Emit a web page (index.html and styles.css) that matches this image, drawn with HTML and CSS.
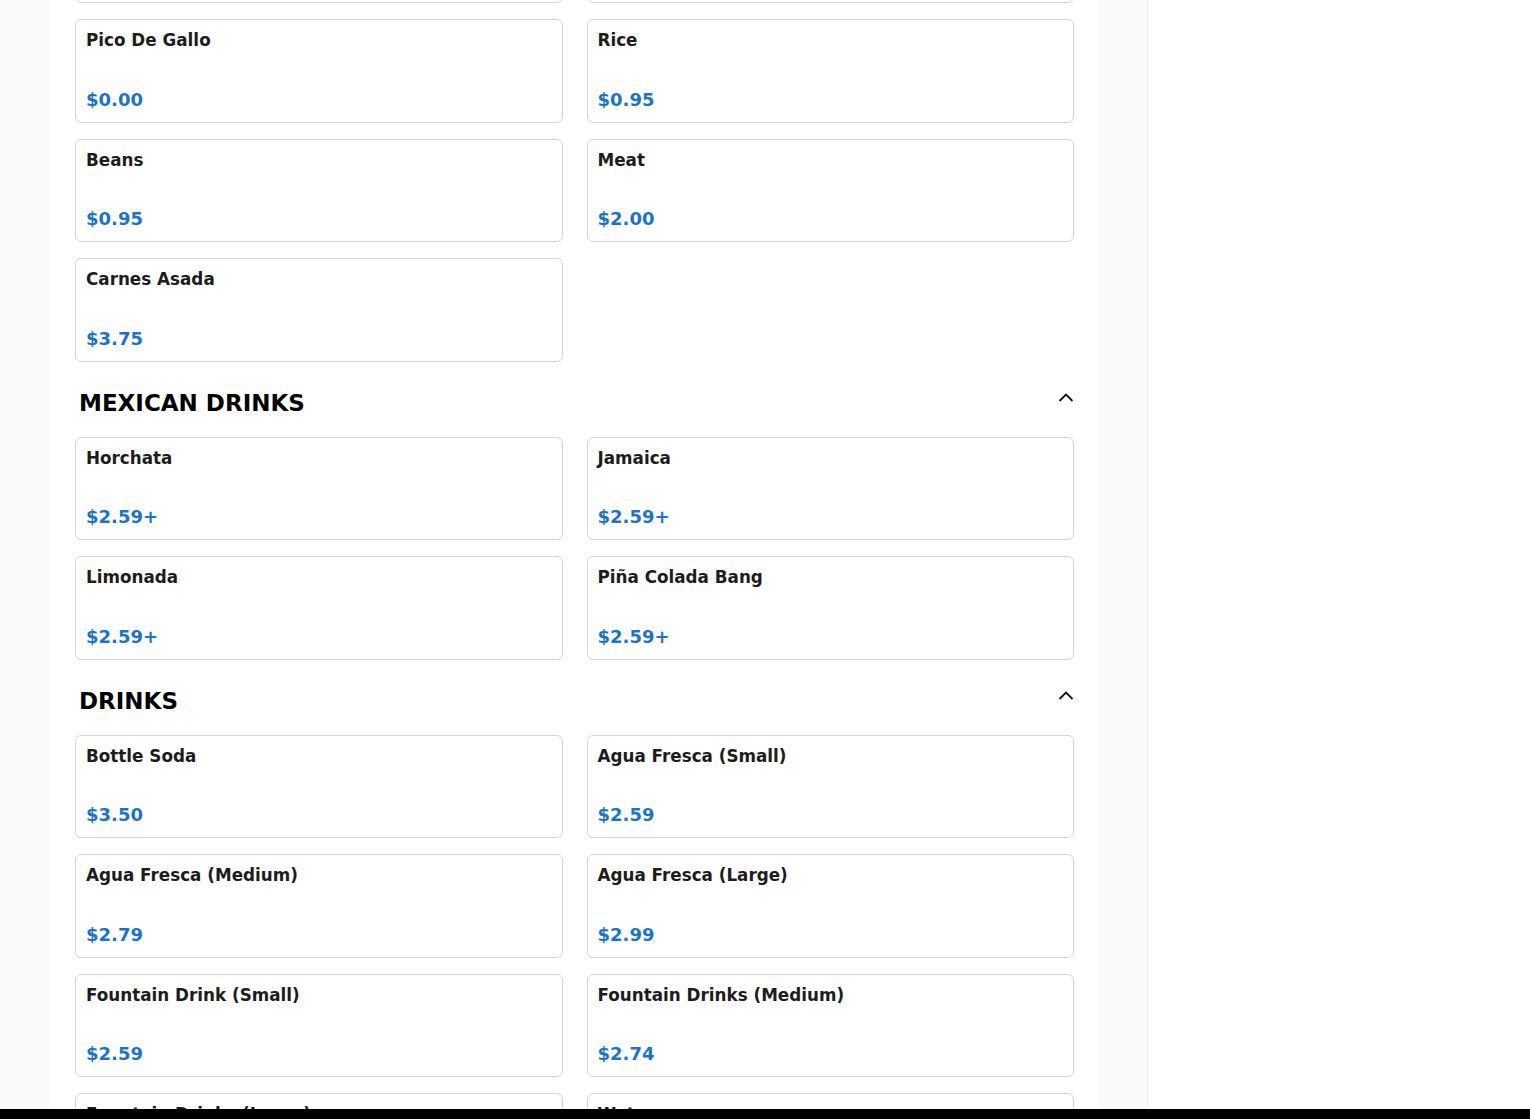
FILE: index.html
```html
<!DOCTYPE html>
<html lang="en">
<head>
    <meta charset="UTF-8">
    <meta name="viewport" content="width=device-width, initial-scale=1.0">
    <title>Menu</title>
    <link rel="stylesheet" href="styles.css">
</head>
<body>
    <div class="layout">
        <main class="menu">
            <div class="section">
                <div class="items">
                    <div class="item"><div class="item-name">Sour Cream</div><div class="item-price">$0.95</div></div>
                    <div class="item"><div class="item-name">Cheese</div><div class="item-price">$0.95</div></div>
                    <div class="item"><div class="item-name">Pico De Gallo</div><div class="item-price">$0.00</div></div>
                    <div class="item"><div class="item-name">Rice</div><div class="item-price">$0.95</div></div>
                    <div class="item"><div class="item-name">Beans</div><div class="item-price">$0.95</div></div>
                    <div class="item"><div class="item-name">Meat</div><div class="item-price">$2.00</div></div>
                    <div class="item"><div class="item-name">Carnes Asada</div><div class="item-price">$3.75</div></div>
                </div>
            </div>

            <div class="section">
                <div class="section-header">
                    <h2>MEXICAN DRINKS</h2>
                    <svg class="chevron" width="16" height="16" viewBox="0 0 16 16"><polyline points="1.5,11 8,4.5 14.5,11" fill="none" stroke="#111" stroke-width="1.8"/></svg>
                </div>
                <div class="items">
                    <div class="item"><div class="item-name">Horchata</div><div class="item-price">$2.59+</div></div>
                    <div class="item"><div class="item-name">Jamaica</div><div class="item-price">$2.59+</div></div>
                    <div class="item"><div class="item-name">Limonada</div><div class="item-price">$2.59+</div></div>
                    <div class="item"><div class="item-name">Piña Colada Bang</div><div class="item-price">$2.59+</div></div>
                </div>
            </div>

            <div class="section">
                <div class="section-header">
                    <h2>DRINKS</h2>
                    <svg class="chevron" width="16" height="16" viewBox="0 0 16 16"><polyline points="1.5,11 8,4.5 14.5,11" fill="none" stroke="#111" stroke-width="1.8"/></svg>
                </div>
                <div class="items">
                    <div class="item"><div class="item-name">Bottle Soda</div><div class="item-price">$3.50</div></div>
                    <div class="item"><div class="item-name">Agua Fresca (Small)</div><div class="item-price">$2.59</div></div>
                    <div class="item"><div class="item-name">Agua Fresca (Medium)</div><div class="item-price">$2.79</div></div>
                    <div class="item"><div class="item-name">Agua Fresca (Large)</div><div class="item-price">$2.99</div></div>
                    <div class="item"><div class="item-name">Fountain Drink (Small)</div><div class="item-price">$2.59</div></div>
                    <div class="item"><div class="item-name">Fountain Drinks (Medium)</div><div class="item-price">$2.74</div></div>
                    <div class="item"><div class="item-name">Fountain Drinks (Large)</div><div class="item-price">$2.89</div></div>
                    <div class="item"><div class="item-name">Water</div><div class="item-price">$1.50</div></div>
                </div>
            </div>
        </main>
        <aside class="sidebar"></aside>
    </div>
    <div class="bottom-bar"></div>
</body>
</html>
```

FILE: styles.css
```css
body {
    margin: 0;
    background-color: #fafafa;
    font-family: "DejaVu Sans", sans-serif;
    overflow: hidden;
}
.layout {
    display: flex;
    align-items: flex-start;
    height: 100vh;
}
.menu {
    width: 1049px;
    box-sizing: border-box;
    margin-left: 50px;
    margin-top: -100.5px;
    padding: 0 25px 40px;
    background-color: white;
}
.sidebar {
    flex: 1;
    margin-left: 48px;
    height: 100vh;
    background-color: white;
    border-left: 1px solid #ededed;
}
.section-header {
    display: flex;
    justify-content: space-between;
    margin: 28px 0 21px;
    padding-left: 4px;
}
.section-header h2 {
    margin: 0;
    font-size: 23px;
    font-weight: bold;
    color: #000;
    line-height: normal;
}
.chevron {
    flex-shrink: 0;
}
.items {
    display: grid;
    grid-template-columns: 1fr 1fr;
    column-gap: 24px;
    row-gap: 16px;
}
.item {
    height: 103.5px;
    box-sizing: border-box;
    display: flex;
    flex-direction: column;
    justify-content: space-between;
    padding: 10px 10px 12px;
    border: 1px solid #d4d4d4;
    border-radius: 6px;
    background-color: white;
}
.item-name {
    font-size: 16.8px;
    font-weight: bold;
    color: #1c1c1c;
}
.item-price {
    font-size: 18px;
    font-weight: bold;
    color: #1f73c3;
}
.bottom-bar {
    position: fixed;
    left: 0;
    right: 0;
    bottom: 0;
    height: 10px;
    background-color: #000;
}
```
